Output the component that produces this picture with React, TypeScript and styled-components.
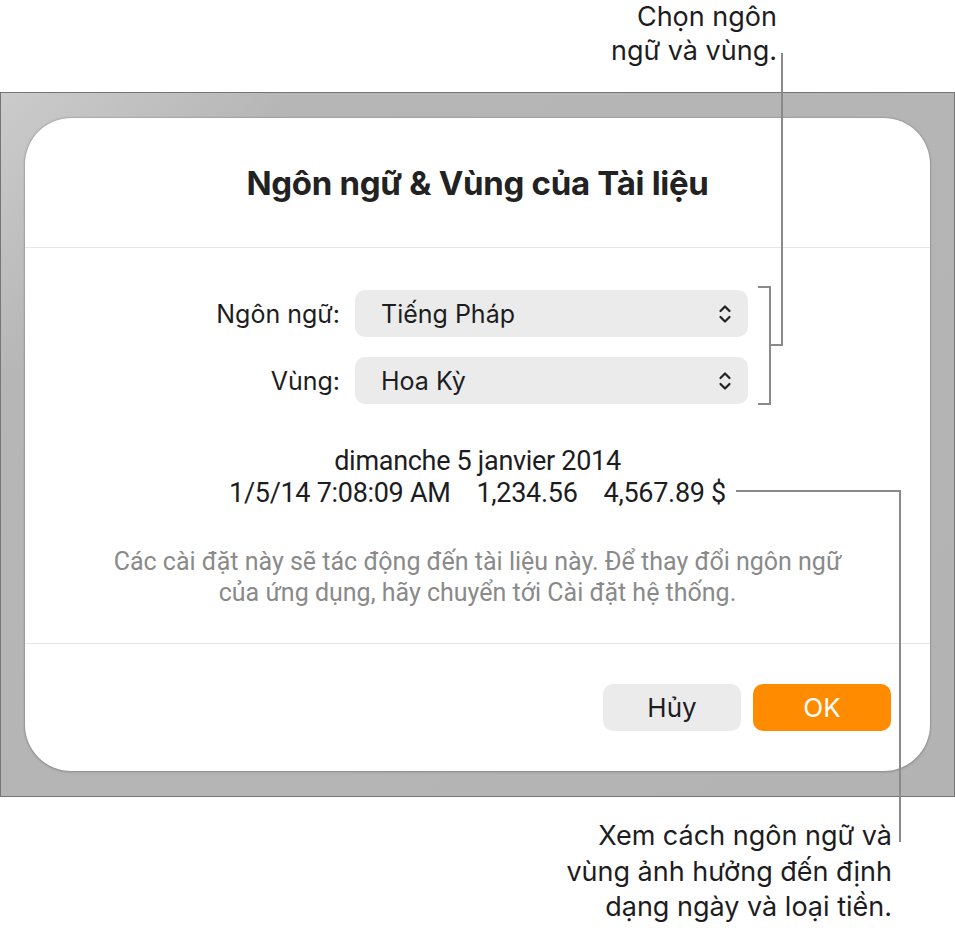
import styled, { createGlobalStyle } from 'styled-components';

const GlobalStyle = createGlobalStyle`
	html, body {
		margin: 0;
		padding: 0;
		background: #fff;
	}
	body {
		font-family: Inter, 'Noto Sans', sans-serif;
		color: #1d1d1f;
	}
`;

const Page = styled.div`
	position: relative;
	width: 955px;
	height: 928px;
	overflow: hidden;
`;

const Caption = styled.div<{ $right: number; $height: number; $top: number; $lh: number }>`
	box-sizing: border-box;
	height: ${(p) => p.$height}px;
	padding: ${(p) => p.$top}px ${(p) => p.$right}px 0 0;
	text-align: right;
	font-family: Inter, 'Noto Sans', sans-serif;
	font-size: 27px;
	line-height: ${(p) => p.$lh}px;
	color: #1d1d1f;
`;

const Frame = styled.div`
	box-sizing: border-box;
	width: 955px;
	height: 705px;
	padding: 25px 24px 25px 24px;
	border: 1px solid #767676;
	background: linear-gradient(135deg, #cbcbcb 0%, #b6b6b6 18%, #b3b3b3 100%);
`;

const Dialog = styled.div`
	display: flex;
	flex-direction: column;
	width: 905px;
	height: 653px;
	background: #fff;
	border-radius: 46px;
	box-shadow: 0 0 2px rgba(0, 0, 0, 0.35), 0 1px 3px rgba(0, 0, 0, 0.15);
	overflow: hidden;
`;

const Header = styled.div`
	height: 129px;
	display: flex;
	align-items: center;
	justify-content: center;
	border-bottom: 1px solid #e6e6e6;
`;

const Title = styled.h1`
	margin: 0;
	font-family: Inter, 'Noto Sans', sans-serif;
	font-size: 33px;
	font-weight: 700;
	color: #222;
	letter-spacing: -0.3px;
`;

const Body = styled.div`
	flex: 1;
	display: flex;
	flex-direction: column;
	border-bottom: 1px solid #e6e6e6;
`;

const Form = styled.div`
	display: grid;
	grid-template-columns: 140px 393px;
	column-gap: 15px;
	row-gap: 20px;
	margin: 42px 0 0 175px;
`;

const Label = styled.label`
	align-self: center;
	text-align: right;
	font-size: 25px;
	color: #1d1d1f;
	white-space: nowrap;
`;

const Select = styled.div`
	display: flex;
	align-items: center;
	justify-content: space-between;
	height: 47px;
	padding: 0 16px 0 26px;
	border-radius: 10px;
	background: #ebebeb;
	font-size: 25px;
	color: #1d1d1f;
`;

const Sample = styled.div`
	margin-top: 41px;
	text-align: center;
	font-family: Roboto, 'Noto Sans', sans-serif;
	font-size: 27px;
	line-height: 32px;
	color: #1d1d1f;
	letter-spacing: -0.3px;
`;

const Gap = styled.span`
	display: inline-block;
	width: 26px;
`;

const Hint = styled.p`
	margin: 37px 0 0;
	text-align: center;
	font-family: Roboto, 'Noto Sans', sans-serif;
	font-size: 25px;
	line-height: 31px;
	color: #8a8a8a;
`;

const Footer = styled.div`
	flex: 0 0 127px;
	display: flex;
	justify-content: flex-end;
	align-items: flex-start;
	gap: 12px;
	padding: 40px 39px 0 0;
	box-sizing: border-box;
`;

const Button = styled.button<{ $primary?: boolean }>`
	width: 138px;
	height: 47px;
	border: none;
	border-radius: 10px;
	background: ${(p) => (p.$primary ? '#ff8c00' : '#ebebeb')};
	color: ${(p) => (p.$primary ? '#fff' : '#1d1d1f')};
	font-family: Inter, 'Noto Sans', sans-serif;
	font-size: 26px;
	padding: 0;
`;

const Callouts = styled.svg`
	position: absolute;
	left: 0;
	top: 0;
	pointer-events: none;
`;

const Chevrons = () => (
	<svg width="14" height="22" viewBox="0 0 14 22" fill="none">
		<path d="M2.5 8 L7 3.5 L11.5 8" stroke="#222" strokeWidth="2.2" strokeLinecap="round" strokeLinejoin="round" />
		<path d="M2.5 14 L7 18.5 L11.5 14" stroke="#222" strokeWidth="2.2" strokeLinecap="round" strokeLinejoin="round" />
	</svg>
);

const App = () => {
	return (
		<>
			<GlobalStyle />
			<Page>
				<Caption $right={178} $height={92} $top={0} $lh={34}>
					Chọn ngôn
					<br />
					ngữ và vùng.
				</Caption>
				<Frame>
					<Dialog>
						<Header>
							<Title>Ngôn ngữ &amp; Vùng của Tài liệu</Title>
						</Header>
						<Body>
							<Form>
								<Label>Ngôn ngữ:</Label>
								<Select>
									Tiếng Pháp
									<Chevrons />
								</Select>
								<Label>Vùng:</Label>
								<Select>
									Hoa Kỳ
									<Chevrons />
								</Select>
							</Form>
							<Sample>
								dimanche 5 janvier 2014
								<br />
								1/5/14 7:08:09 AM
								<Gap />
								1,234.56
								<Gap />
								4,567.89 $
							</Sample>
							<Hint>
								Các cài đặt này sẽ tác động đến tài liệu này. Để thay đổi ngôn ngữ
								<br />
								của ứng dụng, hãy chuyển tới Cài đặt hệ thống.
							</Hint>
						</Body>
						<Footer>
							<Button>Hủy</Button>
							<Button $primary>OK</Button>
						</Footer>
					</Dialog>
				</Frame>
				<Caption $right={63} $height={131} $top={21} $lh={35.5}>
					Xem cách ngôn ngữ và
					<br />
					vùng ảnh hưởng đến định
					<br />
					dạng ngày và loại tiền.
				</Caption>
				<Callouts width="955" height="928" viewBox="0 0 955 928">
					<g fill="none" stroke="#8a8a8a" strokeWidth="2">
						<path d="M758 287 H770 V404 H758" />
						<path d="M770 345 H782 V53" />
						<path d="M736 491 H900 V842" />
					</g>
				</Callouts>
			</Page>
		</>
	);
};

export default App;
